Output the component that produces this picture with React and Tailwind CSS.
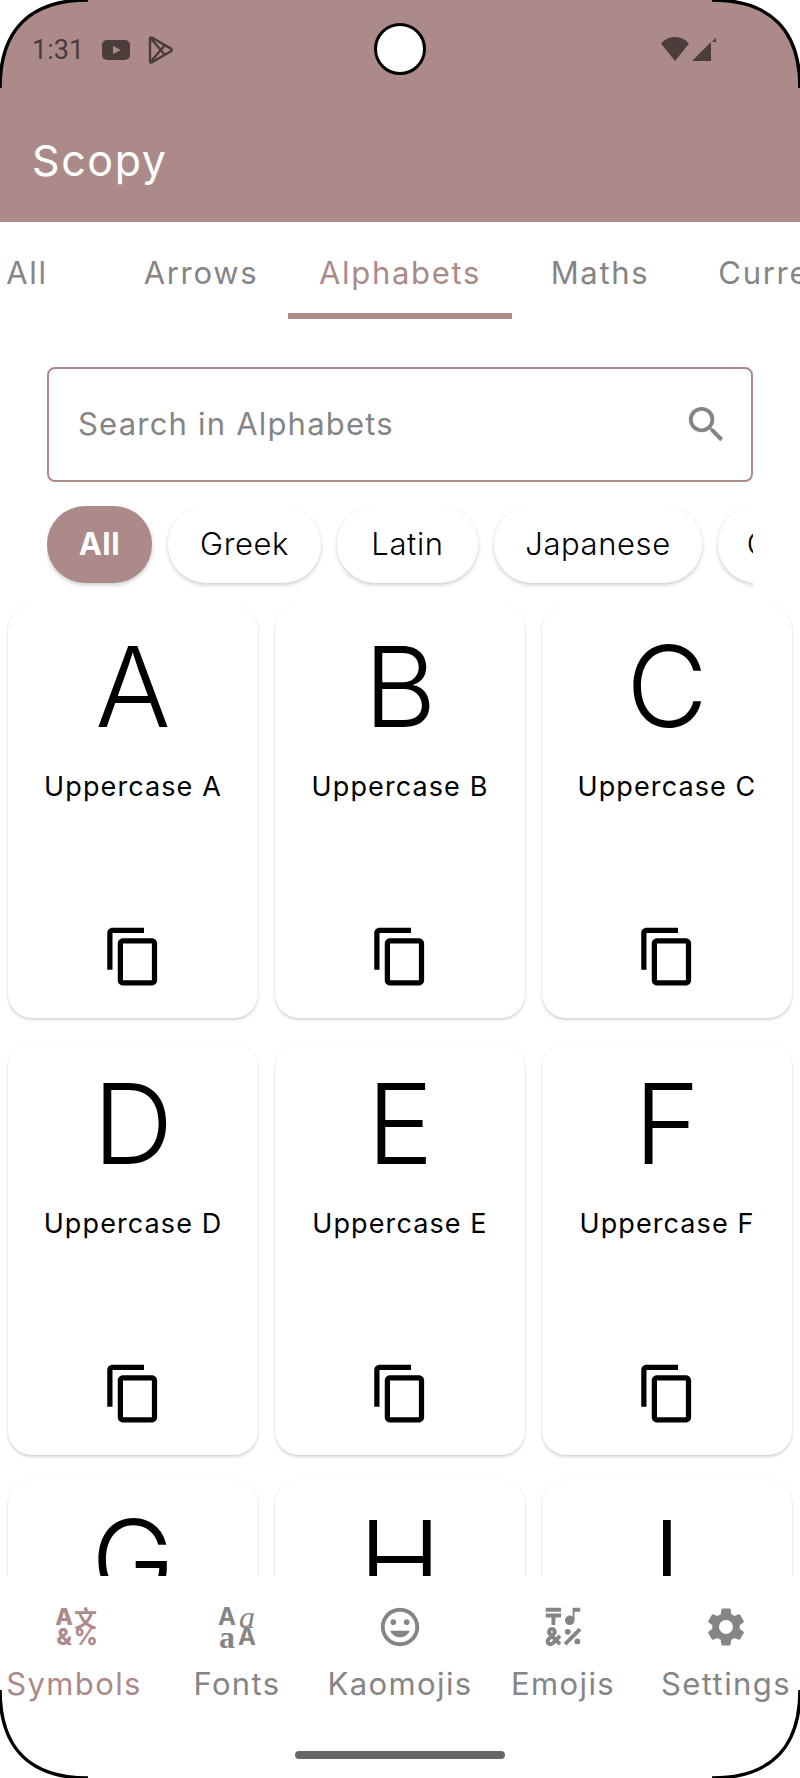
import { MdSearch, MdOutlineContentCopy, MdEmojiSymbols, MdOutlineMood, MdSettings } from 'react-icons/md'

const tabs = [
  { label: 'All', w: 'w-[174px]' },
  { label: 'Arrows', w: 'w-[174px]' },
  { label: 'Alphabets', w: 'w-[224px]', active: true },
  { label: 'Maths', w: 'w-[176px]' },
  { label: 'Currencies', w: 'w-[238px]' },
]

const chips = [
  { label: 'All', w: 'w-[105px]', active: true },
  { label: 'Greek', w: 'w-[153px]' },
  { label: 'Latin', w: 'w-[141px]' },
  { label: 'Japanese', w: 'w-[208px]' },
  { label: 'Cyrillic', w: 'w-[160px]' },
]

const letters = ['A', 'B', 'C', 'D', 'E', 'F', 'G', 'H', 'I']

export default function App() {
  return (
    <div className="relative w-[800px] h-[1778px] overflow-hidden bg-white flex flex-col font-['Inter',sans-serif]">
      {/* App bar with status row */}
      <header className="h-[222px] shrink-0 bg-[#ab8a89] flex flex-col">
        <StatusBar />
        <h1 className="mt-[34px] ml-[32px] text-[43px] leading-[52px] tracking-[1.6px] text-white">Scopy</h1>
      </header>

      {/* Tabs */}
      <div className="h-[98px] shrink-0 flex -ml-[60px]">
        {tabs.map((t) => (
          <div key={t.label} className={`${t.w} shrink-0 relative flex justify-center pt-[31px]`}>
            <span className={`text-[31px] leading-[40px] tracking-[1.7px] ${t.active ? 'text-[#ab8a89]' : 'text-[#858585]'}`}>
              {t.label}
            </span>
            {t.active && <div className="absolute bottom-[1px] left-0 right-0 h-[6px] bg-[#ab8a89]" />}
          </div>
        ))}
      </div>

      {/* Search */}
      <div className="mt-[47px] mx-[47px] h-[115px] shrink-0 border-2 border-[#ab8a89] rounded-[8px] flex items-center justify-between pl-[29px] pr-[5px]">
        <span className="text-[31px] tracking-[1.2px] text-[#858585]">Search in Alphabets</span>
        <MdSearch size={47} className="text-[#858585] mr-[16px]" />
      </div>

      {/* Filter chips */}
      <div className="mt-[24px] mx-[47px] h-[85px] shrink-0 overflow-hidden flex gap-[16px]">
        {chips.map((c) => (
          <div
            key={c.label}
            className={`${c.w} h-[77px] shrink-0 rounded-[38px] flex items-center justify-center text-[31px] tracking-[0.6px] shadow-[0_2px_4px_rgba(0,0,0,0.2)] ${c.active ? 'bg-[#ab8a89] text-white font-bold' : 'bg-white text-black font-light'}`}
          >
            {c.label}
          </div>
        ))}
      </div>

      {/* Symbol cards */}
      <div className="mt-[15px] flex-1 min-h-0 overflow-hidden px-[8px]">
        <div className="grid grid-cols-3 gap-x-[17px] gap-y-[25px] pb-[6px]">
          {letters.map((l) => (
            <div key={l} className="h-[412px] rounded-[24px] bg-white shadow-[0_2px_3px_rgba(0,0,0,0.16),0_0_2px_rgba(0,0,0,0.06)] flex flex-col items-center">
              <div className="mt-[15px] h-[130px] text-[112px] leading-[130px] font-light text-black">{l}</div>
              <div className="mt-[19px] text-[27px] leading-[34px] tracking-[1.1px] text-black whitespace-nowrap">Uppercase {l}</div>
              <MdOutlineContentCopy size={63} className="mt-[121px] text-black" />
            </div>
          ))}
        </div>
      </div>

      {/* Bottom navigation */}
      <nav className="h-[202px] shrink-0 bg-white relative">
        <div className="flex justify-center pt-[28px]">
          <NavItem label="Symbols" active icon={<SymbolsIcon />} />
          <NavItem label="Fonts" icon={<FontsIcon />} />
          <NavItem label="Kaomojis" icon={<MdOutlineMood size={46} />} />
          <NavItem label="Emojis" icon={<MdEmojiSymbols size={46} />} />
          <NavItem label="Settings" icon={<MdSettings size={46} />} />
        </div>
        <div className="absolute left-[295px] bottom-[19px] w-[210px] h-[8px] rounded-full bg-[#666666]" />
      </nav>

      <Corners />
      <div className="absolute left-[374px] top-[23px] w-[52px] h-[52px] rounded-full bg-white border-[3px] border-black" />
    </div>
  )
}

function StatusBar() {
  return (
    <div className="h-[100px] shrink-0 flex items-center pl-[32px] pr-[83px] text-[#4a3d3c]">
      <span className="font-['Roboto',sans-serif] text-[27px] leading-none w-[70px]">1:31</span>
      <svg width="28" height="20" viewBox="0 0 28 20" className="shrink-0">
        <rect width="28" height="20" rx="5" fill="#4a3d3c" />
        <path d="M11 6l8 4-8 4z" fill="#ab8a89" />
      </svg>
      <svg width="26" height="28" viewBox="0 0 26 28" fill="none" stroke="#4a3d3c" strokeWidth="2.4" strokeLinejoin="round" className="ml-[18px] shrink-0">
        <path d="M2 2.5c0-1 1-1.400 1.800-.9L23 12.600c1 .6 1 2.100 0 2.700L3.800 26.400C3 26.900 2 26.400 2 25.400z" />
        <path d="M2.500 2l14.500 17M2.500 26L17 9" />
      </svg>
      <div className="flex-1" />
      <svg width="56" height="26" viewBox="0 0 56 26" fill="#4a3d3c" className="shrink-0">
        <path d="M0 6.500C4 2 9 0 14 0s10 2 14 6.500L14 24z" />
        <path d="M31 24L50 24V5z" />
        <path d="M51 5L55 .5V5z" />
      </svg>
    </div>
  )
}

function NavItem({ label, icon, active }) {
  return (
    <div className={`w-[163px] shrink-0 flex flex-col items-center ${active ? 'text-[#ab8a89]' : 'text-[#858585]'}`}>
      <div className="h-[46px] flex items-center justify-center">{icon}</div>
      <span className="mt-[14px] text-[31px] leading-[40px] tracking-[1.4px] whitespace-nowrap">{label}</span>
    </div>
  )
}

function SymbolsIcon() {
  return (
    <div className="w-[40px] h-[40px] grid grid-cols-2 font-extrabold text-[23px] leading-[20px] text-center">
      <span>A</span>
      <span className="font-['Noto_Sans_CJK_SC',sans-serif] font-bold">文</span>
      <span>&amp;</span>
      <span>%</span>
    </div>
  )
}

function FontsIcon() {
  return (
    <div className="w-[40px] h-[40px] grid grid-cols-2 text-[24px] leading-[20px] text-center">
      <span className="font-bold">A</span>
      <span className="font-['Liberation_Serif',serif] italic text-[32px]">a</span>
      <span className="font-['Liberation_Serif',serif] font-bold text-[32px]">a</span>
      <span className="font-bold">A</span>
    </div>
  )
}

function Corners() {
  const corner = 'M0 88C0 30 30 0 88 0'
  const transforms = ['', 'translate(800 0) scale(-1 1)', 'translate(0 1778) scale(1 -1)', 'translate(800 1778) scale(-1 -1)']
  return (
    <svg width="800" height="1778" viewBox="0 0 800 1778" className="absolute inset-0 pointer-events-none">
      {transforms.map((t, i) => (
        <g key={i} transform={t}>
          <path d={`${corner}L0 0Z`} fill="#ffffff" />
          <path d={corner} fill="none" stroke="#000000" strokeWidth="3.500" />
        </g>
      ))}
    </svg>
  )
}
